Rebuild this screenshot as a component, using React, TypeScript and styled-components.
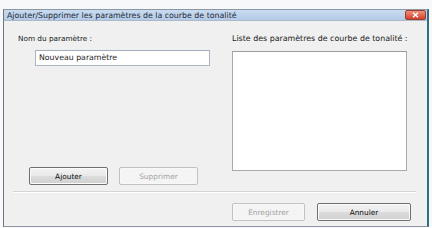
import React from "react";
import styled, { createGlobalStyle } from "styled-components";

const Global = createGlobalStyle`
  html, body { margin: 0; padding: 0; background: #ffffff; }
  body { font-family: "DejaVu Sans", Verdana, sans-serif; }
  * { box-sizing: border-box; }
`;

const Page = styled.div`
  width: 432px;
  height: 228px;
  padding: 9px 3px 0 3px;
  background: #f7f8fa;
`;

const Window = styled.div`
  width: 426px;
  height: 218px;
  display: flex;
  flex-direction: column;
  border-left: 1px solid #6f757c;
  border-top: 1px solid #8b97a4;
  border-right: 2px solid #2f6f80;
  border-bottom: 1px solid #8b97a4;
  background: #f0f0f0;
`;

const TitleBar = styled.div`
  height: 11px;
  display: flex;
  align-items: center;
  justify-content: space-between;
  padding: 0 0 0 3px;
  background: linear-gradient(to bottom, #c9dbef, #b4cbe6);
  border-bottom: 1px solid #aab9cb;
`;

const Title = styled.span`
  font-size: 7.85px;
  color: #1e2a3a;
  white-space: nowrap;
`;

const CloseBtn = styled.div`
  width: 21px;
  height: 10px;
  display: flex;
  align-items: center;
  justify-content: center;
  border-radius: 2px;
  background: linear-gradient(to bottom, #ee8f7a, #d3412c);
  border: 1px solid #9a3f2e;
  margin-right: 1px;
`;

const Main = styled.div`
  display: flex;
  padding: 13px 0 0 14px;
`;

const LeftCol = styled.div`
  width: 196px;
  height: 151px;
  display: flex;
  flex-direction: column;
`;

const RightCol = styled.div`
  width: 180px;
  margin-left: 18px;
  display: flex;
  flex-direction: column;
`;

const Label = styled.div<{ $size?: number }>`
  height: 10px;
  line-height: 10px;
  font-size: ${(p) => p.$size ?? 7.9}px;
  color: #202020;
  white-space: nowrap;
`;

const TextInput = styled.div`
  margin: 6px 0 0 17px;
  width: 175px;
  height: 16px;
  border: 1px solid #abb4c0;
  border-top-color: #a2adbb;
  border-radius: 1px;
  background: #ffffff;
  font-size: 7.8px;
  color: #1a1a1a;
  line-height: 14px;
  padding-left: 3px;
  white-space: nowrap;
`;

const ListBox = styled.div`
  margin-top: 7px;
  width: 175px;
  height: 120px;
  border: 1px solid #a9a9a9;
  border-top-color: #9c9c9c;
  background: #ffffff;
`;

const ButtonRow = styled.div`
  margin-top: auto;
  margin-left: 11px;
  display: flex;
  gap: 11px;
`;

const Button = styled.div<{ $w: number; $disabled?: boolean }>`
  width: ${(p) => p.$w}px;
  height: 18px;
  display: flex;
  align-items: center;
  justify-content: center;
  font-size: 7.4px;
  border-radius: 2px;
  border: 1px solid ${(p) => (p.$disabled ? "#bfc1c3" : "#707070")};
  color: ${(p) => (p.$disabled ? "#a3a3a3" : "#111111")};
  background: ${(p) =>
    p.$disabled
      ? "#f4f4f4"
      : "linear-gradient(to bottom, #f3f3f3 0%, #e9e9e9 50%, #dcdcdc 51%, #d0d0d0 100%)"};
  box-shadow: inset 0 0 0 1px ${(p) => (p.$disabled ? "#f8f8f8" : "#fbfbfb")};
`;

const Separator = styled.div`
  margin: 6px 11px 0 9px;
  height: 2px;
  border-top: 1px solid #d4d4d4;
  border-bottom: 1px solid #ffffff;
`;

const Footer = styled.div`
  margin-top: 10px;
  display: flex;
  justify-content: flex-end;
  gap: 12px;
  padding-right: 16px;
`;

export default function App() {
  return (
    <>
      <Global />
      <Page>
        <Window>
          <TitleBar>
            <Title>Ajouter/Supprimer les paramètres de la courbe de tonalité</Title>
            <CloseBtn>
              <svg width="7" height="6" viewBox="0 0 7 6">
                <path d="M1 0.8 L6 5.2 M6 0.8 L1 5.2" stroke="#ffffff" strokeWidth="1.4" />
              </svg>
            </CloseBtn>
          </TitleBar>
          <Main>
            <LeftCol>
              <Label $size={7.3}>Nom du paramètre :</Label>
              <TextInput>Nouveau paramètre</TextInput>
              <ButtonRow>
                <Button $w={79}>Ajouter</Button>
                <Button $w={79} $disabled>Supprimer</Button>
              </ButtonRow>
            </LeftCol>
            <RightCol>
              <Label>Liste des paramètres de courbe de tonalité :</Label>
              <ListBox />
            </RightCol>
          </Main>
          <Separator />
          <Footer>
            <Button $w={73} $disabled>Enregistrer</Button>
            <Button $w={94}>Annuler</Button>
          </Footer>
        </Window>
      </Page>
    </>
  );
}
